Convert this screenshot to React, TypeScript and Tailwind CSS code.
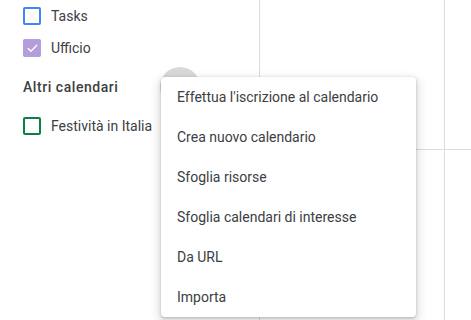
import { Check } from 'lucide-react';

const menuItems = [
  "Effettua l'iscrizione al calendario",
  'Crea nuovo calendario',
  'Sfoglia risorse',
  'Sfoglia calendari di interesse',
  'Da URL',
  'Importa',
];

function CalendarRow({ label, color, checked }: { label: string; color: string; checked?: boolean }) {
  return (
    <div className="flex items-center h-8 pl-[23px]">
      <span
        className="w-[18px] h-[18px] rounded-[2px] border-2 flex items-center justify-center"
        style={{ borderColor: color, backgroundColor: checked ? color : 'transparent' }}
      >
        {checked && <Check size={13} strokeWidth={2.5} className="text-white" />}
      </span>
      <span className="ml-[10px] text-[14px] text-[#3c4043]">{label}</span>
    </div>
  );
}

export default function App() {
  return (
    <div className="relative w-[471px] h-[320px] overflow-hidden bg-white flex" style={{ fontFamily: 'Roboto, "Noto Sans", sans-serif' }}>
      <div className="w-[259px] shrink-0">
        <CalendarRow label="Tasks" color="#4285f4" />
        <CalendarRow label="Ufficio" color="#b39ddb" checked />
        <div className="h-[46px] flex items-center pl-[23px] text-[14px] font-medium text-[#3c4043] tracking-[0.55px]">
          Altri calendari
        </div>
        <CalendarRow label="Festività in Italia" color="#0b8043" />
      </div>
      <div className="flex-1 border-l border-[#dadce0] grid grid-cols-[185px_1fr] grid-rows-[150px_1fr]">
        <div className="border-r border-b border-[#dadce0]" />
        <div className="border-b border-[#dadce0]" />
        <div className="border-r border-[#dadce0]" />
        <div />
      </div>

      <div className="absolute left-[160px] top-[67px] w-10 h-10 rounded-full bg-[#d9d9d9]" />

      <div className="absolute left-[161px] top-[77px] w-[255px] bg-white rounded-[4px] shadow-[0_4px_8px_3px_rgba(60,64,67,0.15),0_1px_3px_rgba(60,64,67,0.3)]">
        {menuItems.map((item) => (
          <div key={item} className="h-10 flex items-center pl-4 text-[14px] text-[#3c4043]">
            {item}
          </div>
        ))}
      </div>
    </div>
  );
}
